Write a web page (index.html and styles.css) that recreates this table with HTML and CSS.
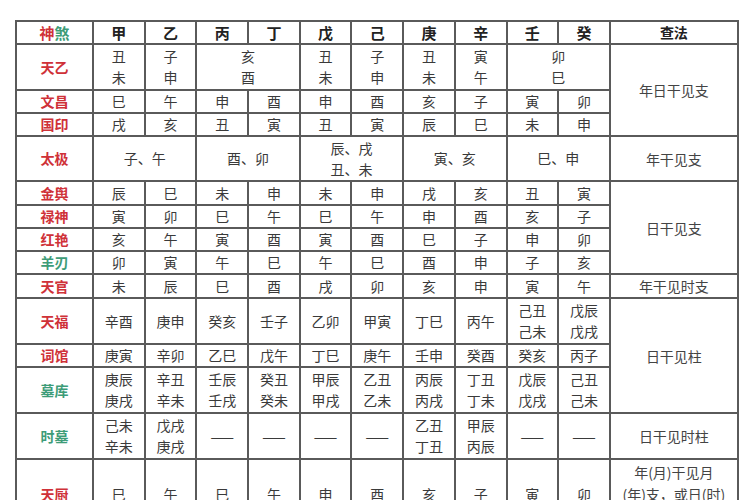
FILE: index.html
```html
<!DOCTYPE html>
<html lang="zh">
<head>
<meta charset="utf-8">
<link rel="stylesheet" href="styles.css">
</head>
<body>
<div class="page">
<table class="ss">
<colgroup>
<col class="c-name"><col class="c-g"><col class="c-g"><col class="c-g"><col class="c-g"><col class="c-g"><col class="c-g"><col class="c-g"><col class="c-g"><col class="c-g"><col class="c-g"><col class="c-rule">
</colgroup>
<tr class="h23 head">
<td><span class="red">神</span><span class="green">煞</span></td>
<td>甲</td><td>乙</td><td>丙</td><td>丁</td><td>戊</td><td>己</td><td>庚</td><td>辛</td><td>壬</td><td>癸</td>
<td class="rulehead">查法</td>
</tr>
<tr class="h46">
<td class="lab red">天乙</td>
<td>丑<br>未</td><td>子<br>申</td><td colspan="2">亥<br>酉</td><td>丑<br>未</td><td>子<br>申</td><td>丑<br>未</td><td>寅<br>午</td><td colspan="2">卯<br>巳</td>
<td rowspan="3" class="rule">年日干见支</td>
</tr>
<tr class="h23">
<td class="lab red">文昌</td>
<td>巳</td><td>午</td><td>申</td><td>酉</td><td>申</td><td>酉</td><td>亥</td><td>子</td><td>寅</td><td>卯</td>
</tr>
<tr class="h22">
<td class="lab red">国印</td>
<td>戌</td><td>亥</td><td>丑</td><td>寅</td><td>丑</td><td>寅</td><td>辰</td><td>巳</td><td>未</td><td>申</td>
</tr>
<tr class="h45">
<td class="lab red">太极</td>
<td colspan="2">子、午</td><td colspan="2">酉、卯</td><td colspan="2">辰、戌<br>丑、未</td><td colspan="2">寅、亥</td><td colspan="2">巳、申</td>
<td class="rule">年干见支</td>
</tr>
<tr class="h24">
<td class="lab red">金舆</td>
<td>辰</td><td>巳</td><td>未</td><td>申</td><td>未</td><td>申</td><td>戌</td><td>亥</td><td>丑</td><td>寅</td>
<td rowspan="4" class="rule">日干见支</td>
</tr>
<tr class="h23">
<td class="lab red">禄神</td>
<td>寅</td><td>卯</td><td>巳</td><td>午</td><td>巳</td><td>午</td><td>申</td><td>酉</td><td>亥</td><td>子</td>
</tr>
<tr class="h23">
<td class="lab red">红艳</td>
<td>亥</td><td>午</td><td>寅</td><td>酉</td><td>寅</td><td>酉</td><td>巳</td><td>子</td><td>申</td><td>卯</td>
</tr>
<tr class="h23">
<td class="lab green">羊刃</td>
<td>卯</td><td>寅</td><td>午</td><td>巳</td><td>午</td><td>巳</td><td>酉</td><td>申</td><td>子</td><td>亥</td>
</tr>
<tr class="h23">
<td class="lab red">天官</td>
<td>未</td><td>辰</td><td>巳</td><td>酉</td><td>戌</td><td>卯</td><td>亥</td><td>申</td><td>寅</td><td>午</td>
<td class="rule">年干见时支</td>
</tr>
<tr class="h46">
<td class="lab red">天福</td>
<td>辛酉</td><td>庚申</td><td>癸亥</td><td>壬子</td><td>乙卯</td><td>甲寅</td><td>丁巳</td><td>丙午</td><td>己丑<br>己未</td><td>戊辰<br>戊戌</td>
<td rowspan="3" class="rule">日干见柱</td>
</tr>
<tr class="h22">
<td class="lab red">词馆</td>
<td>庚寅</td><td>辛卯</td><td>乙巳</td><td>戊午</td><td>丁巳</td><td>庚午</td><td>壬申</td><td>癸酉</td><td>癸亥</td><td>丙子</td>
</tr>
<tr class="h46">
<td class="lab green">墓库</td>
<td>庚辰<br>庚戌</td><td>辛丑<br>辛未</td><td>壬辰<br>壬戌</td><td>癸丑<br>癸未</td><td>甲辰<br>甲戌</td><td>乙丑<br>乙未</td><td>丙辰<br>丙戌</td><td>丁丑<br>丁未</td><td>戊辰<br>戊戌</td><td>己丑<br>己未</td>
</tr>
<tr class="h46">
<td class="lab green">时墓</td>
<td>己未<br>辛未</td><td>戊戌<br>庚戌</td><td>——</td><td>——</td><td>——</td><td>——</td><td>乙丑<br>丁丑</td><td>甲辰<br>丙辰</td><td>——</td><td>——</td>
<td class="rule">日干见时柱</td>
</tr>
<tr class="h70">
<td class="lab red">天厨</td>
<td>巳</td><td>午</td><td>巳</td><td>午</td><td>申</td><td>酉</td><td>亥</td><td>子</td><td>寅</td><td>卯</td>
<td class="rule">年(月)干见月<br>(年)支，或日(时)<br>干见月支</td>
</tr>
</table>
</div>
</body>
</html>
```
FILE: styles.css
```css
html, body {
  margin: 0;
  padding: 0;
  background: #ffffff;
  overflow: hidden;
}
.page {
  width: 750px;
  height: 500px;
  padding: 20px 0 0 15px;
  box-sizing: border-box;
  overflow: hidden;
  font-family: "Noto Sans CJK SC", "Noto Sans", sans-serif;
  color: #3a3a3a;
}
.ss {
  border-collapse: collapse;
  table-layout: fixed;
  width: 723px;
  font-size: 14px;
  line-height: 21px;
}
.c-name { width: 77px; }
.c-g { width: 51.7px; }
.c-rule { width: 128px; }
.ss td {
  border: 2px solid #5a5a5a;
  text-align: center;
  vertical-align: middle;
  padding: 0;
  overflow: hidden;
  white-space: nowrap;
}
.head td {
  font-weight: bold;
  color: #222;
  font-size: 15px;
}
.head .rulehead { font-size: 14px; }
.lab {
  font-weight: bold;
  font-size: 14px;
}
.red { color: #cf3138; }
.green { color: #3d9c78; }
.rule {
  color: #444;
  line-height: 22px;
}
.h22 { height: 22px; }
.h23 { height: 23px; }
.h24 { height: 24px; }
.h45 { height: 45px; }
.h46 { height: 46px; }
.h70 { height: 70px; }
```
